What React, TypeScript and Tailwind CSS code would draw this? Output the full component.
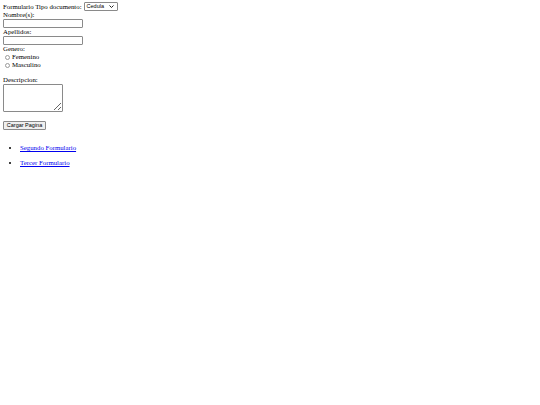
export default function App() {
  const line = "h-[8px] leading-[8px]";
  return (
    <div className="min-h-[405px] bg-white px-[3px] pt-[2px] text-[6.8px] text-black [font-family:'Liberation_Serif',serif]">
      <form className="flex flex-col items-start">
        <div className="flex h-[9px] items-center gap-[2px]">
          <span className={line}>Formulario Tipo documento:</span>
          <div className="flex h-[9px] w-[34px] items-center justify-between rounded-[1px] border border-[#8a8a8a] bg-white pl-[2px] pr-[3px] text-[5.5px] [font-family:'Liberation_Sans',sans-serif]">
            <span>Cedula</span>
            <svg width="5" height="3" viewBox="0 0 5 3">
              <path d="M0.5 0.5 L2.5 2.5 L4.5 0.5" fill="none" stroke="#222" strokeWidth="1" />
            </svg>
          </div>
        </div>
        <span className={line}>Nombre(s):</span>
        <input className="h-[9px] w-[80px] rounded-[1px] border border-[#8a8a8a] bg-white" />
        <span className={line}>Apellidos:</span>
        <input className="h-[9px] w-[80px] rounded-[1px] border border-[#8a8a8a] bg-white" />
        <span className={line}>Genero:</span>
        <label className="flex h-[8px] items-center">
          <span className="mx-[2px] h-[5px] w-[5px] rounded-full border border-[#9a9a9a] bg-white" />
          <span className={line}>Femenino</span>
        </label>
        <label className="flex h-[8px] items-center">
          <span className="mx-[2px] h-[5px] w-[5px] rounded-full border border-[#9a9a9a] bg-white" />
          <span className={line}>Masculino</span>
        </label>
        <div className="h-[7px]" />
        <span className={line}>Descripcion:</span>
        <textarea className="h-[28px] w-[60px] resize rounded-[1px] border border-[#8a8a8a] bg-white" />
        <div className="h-[9px]" />
        <button
          type="button"
          className="h-[9px] w-[43px] rounded-[1px] border border-[#8a8a8a] bg-[#efefef] text-[5.5px] leading-[7px] [font-family:'Liberation_Sans',sans-serif]"
        >
          Cargar Pagina
        </button>
      </form>
      <ul className="mt-[14px] list-disc pl-[17px]">
        <li className={line}>
          <a href="#" className="text-[#0000ee] underline">Segundo Formulario</a>
        </li>
        <li className={`mt-[7px] ${line}`}>
          <a href="#" className="text-[#0000ee] underline">Tercer Formulario</a>
        </li>
      </ul>
    </div>
  );
}
